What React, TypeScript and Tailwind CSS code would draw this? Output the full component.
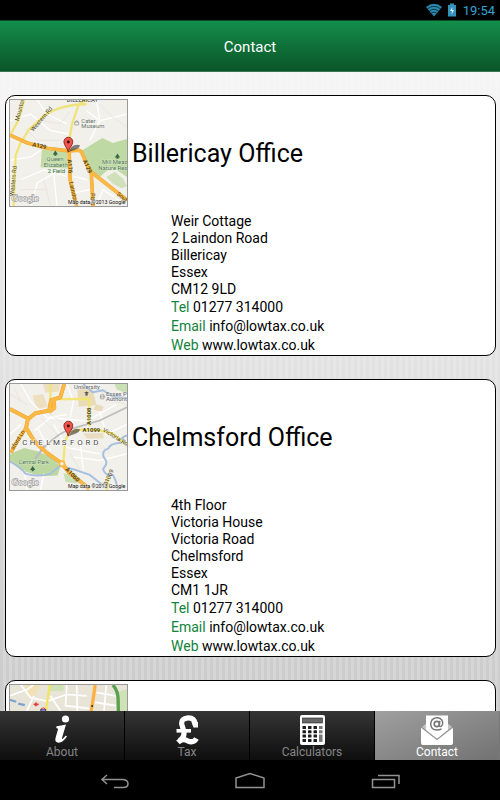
import React, { useState } from 'react';

type Office = {
  name?: string;
  address: string[];
  tel?: string;
  email?: string;
  web?: string;
  map: React.ReactNode;
};

function Pin() {
  return (
    <g>
      <path d="M204 186 L214 170 Q226 160 240 165 Q238 176 222 180 Z" fill="#333" opacity="0.6" />
      <path
        d="M204 186 C202 172 191 167 191 154 A13.500 13.500 0 0 1 218 154 C218 167 206 172 204 186 Z"
        fill="#f0544a"
        stroke="#7d1d16"
        strokeWidth="2.500"
      />
      <circle cx="204.500" cy="155" r="4.500" fill="#3b0a08" />
    </g>
  );
}

function MapCredits({ label }: { label: string }) {
  return (
    <g>
      <text x="32" y="335" fontSize="28" fontFamily="Liberation Serif, serif" fill="#fff" stroke="#9a9a9a" strokeWidth="4" paintOrder="stroke">
        Google
      </text>
      <text x="378" y="344" fontSize="16" textAnchor="end" fill="#111" stroke="#f4f2ec" strokeWidth="2" paintOrder="stroke">
        {label}
      </text>
    </g>
  );
}

function BillericayMap() {
  return (
    <svg viewBox="27 27 356 323" preserveAspectRatio="none" className="block h-full w-full font-[Roboto]">
      <rect x="27" y="27" width="356" height="323" fill="#f2f0eb" />
      <path d="M124 178 L200 186 L203 236 L120 232 Z" fill="#c3dba5" />
      <path d="M247 180 L308 143 L340 158 L383 146 L383 262 L340 232 L318 246 L300 262 L272 240 Z" fill="#bfd9a4" />
      <path d="M320 262 L346 246 L372 268 L383 290 L366 296 L340 282 Z" fill="#cfe0ba" />
      <g fill="none" stroke="#fff" strokeWidth="4">
        <path d="M27 90 L90 70 L150 120 L205 130" />
        <path d="M110 27 L140 70 L200 100" />
        <path d="M30 210 L90 200 L120 180" />
        <path d="M60 270 L130 240 L200 260" />
        <path d="M90 350 L110 280 L160 250 L170 350" />
        <path d="M260 60 L300 90 L383 70" />
        <path d="M290 27 L300 90 L270 150" />
        <path d="M220 260 L262 270 M222 310 L270 300" />
        <path d="M290 350 L310 300 L370 340" />
      </g>
      <g fill="none" stroke="#e4e1da" strokeWidth="2">
        <path d="M70 110 L110 150 L180 150 M210 60 L180 100 L130 90" />
        <path d="M60 300 L140 300 M130 270 L150 350 M300 40 L340 80 L383 110" />
      </g>
      <g fill="none" stroke="#efe47c" strokeWidth="7">
        <path d="M70 27 L52 90 L30 130" />
        <path d="M260 27 L236 40 L216 100 L207 150 L206 180" />
        <path d="M260 40 Q180 40 130 76 L84 118 L58 160 L44 196 L38 350" />
      </g>
      <g fill="none" strokeLinejoin="round">
        <path d="M27 134 L80 158 L140 174 L205 182 L236 180 L244 184 L262 226 L276 248 L383 332" stroke="#e9a436" strokeWidth="11" />
        <path d="M207 182 L210 270 L230 350" stroke="#e9a436" strokeWidth="11" />
        <path d="M274 246 L280 350" stroke="#e9a436" strokeWidth="11" />
        <path d="M27 134 L80 158 L140 174 L205 182 L236 180 L244 184 L262 226 L276 248 L383 332" stroke="#fbb842" strokeWidth="9" />
        <path d="M207 182 L210 270 L230 350 M274 246 L280 350" stroke="#fbb842" strokeWidth="9" />
      </g>
      <g fontSize="18" fill="#4f471c">
        <text transform="translate(54 92) rotate(-76)">Mounton</text>
        <text transform="translate(98 124) rotate(-50)">Western Rd</text>
        <text transform="translate(38 320) rotate(-84)">Western Rd</text>
        <text x="94" y="168" fontWeight="bold" transform="rotate(12 94 168)">A129</text>
        <text transform="translate(202 208) rotate(86)" fontWeight="bold">A176</text>
        <text transform="translate(207 278) rotate(78)">Laindon</text>
        <text transform="translate(248 212) rotate(66)" fontWeight="bold">A129</text>
        <text transform="translate(284 348) rotate(-86)">S Rd</text>
        <text transform="translate(350 316) rotate(38)">Sout</text>
        <text x="200" y="34" fill="#333">BILLERICAY</text>
      </g>
      <g fontSize="18" fill="#66716b" stroke="#f4f3ee" strokeWidth="2" paintOrder="stroke">
        <text x="244" y="96">Cater</text>
        <text x="244" y="113">Museum</text>
      </g>
      <path d="M224 94 h12 v9 h-12 z M227 94 v-3 h6 v3" fill="none" stroke="#8a8a8a" strokeWidth="2" />
      <g fontSize="18" fill="#3f7248" stroke="#e8f0dc" strokeWidth="2" paintOrder="stroke" textAnchor="middle">
        <text x="164" y="214">Queen</text>
        <text x="166" y="231">Elizabeth</text>
        <text x="168" y="248">2 Field</text>
        <text x="346" y="223">Mill Mead</text>
        <text x="340" y="240">Nature Res</text>
      </g>
      <path d="M165 181 l8 12 h-5 v4 h-6 v-4 h-5 z M354 190 l8 12 h-5 v4 h-6 v-4 h-5 z" fill="#35674b" />
      <Pin />
      <MapCredits label="Map data ©2013 Google" />
    </svg>
  );
}

function ChelmsfordMap() {
  return (
    <svg viewBox="27 27 356 323" preserveAspectRatio="none" className="block h-full w-full font-[Roboto]">
      <rect x="27" y="27" width="356" height="323" fill="#f2f0eb" />
      <path d="M96 62 L128 58 L142 96 L108 104 Z M128 27 L180 27 L176 50 L134 54 Z" fill="#eddfbf" />
      <path d="M232 44 L278 40 L290 92 L236 96 Z M290 88 L312 96 L306 110 L280 106 Z" fill="#eadbb8" />
      <path d="M250 178 L310 176 L312 192 L262 194 Z" fill="#e9dcc0" />
      <path d="M27 240 L70 222 L110 232 L158 252 L180 280 L172 306 L120 308 L60 290 L27 262 Z" fill="#bdd7a0" />
      <path d="M345 27 L383 27 L383 56 L352 44 Z M190 300 L230 300 L232 330 L196 326 Z" fill="#c9dfb4" />
      <g fill="none" stroke="#fff" strokeWidth="4">
        <path d="M60 27 L90 80 L140 130 L200 120" />
        <path d="M100 170 L150 130 L260 140 L350 90" />
        <path d="M200 27 L220 80 L210 130" />
        <path d="M110 160 L150 230 M160 150 L200 220 L300 240" />
        <path d="M240 200 L250 290 M220 250 L300 260 L383 240" />
        <path d="M27 180 L60 150 M300 110 L320 180 L383 150" />
        <path d="M70 290 L80 350 M130 300 L120 350" />
      </g>
      <g fill="none" stroke="#e2dfd8" strokeWidth="2">
        <path d="M120 130 L180 190 M140 110 L230 180 M280 190 L330 240 M210 240 L240 290" />
        <path d="M30 60 L80 90 M40 40 L60 80 M300 40 L320 70 L383 90" />
      </g>
      <g fill="none" stroke="#a6bfdf" strokeWidth="6" strokeLinejoin="round">
        <path d="M250 27 L278 52 L310 46 L340 66 L383 70" />
        <path d="M27 264 Q60 280 74 300 Q110 312 150 300 L180 276 L230 290 L270 304 L320 344" />
        <path d="M383 184 Q362 190 366 206 Q330 208 326 224 Q306 228 312 250 Q330 266 310 286 Q318 310 340 304 L348 320 L356 350" />
        <path d="M104 256 L132 214" />
      </g>
      <path d="M104 254 Q150 190 206 166 L300 138 L383 98" fill="none" stroke="#bdbdbd" strokeWidth="5" />
      <g fill="none" stroke="#f2e576" strokeWidth="7" strokeLinejoin="round">
        <path d="M150 27 L150 74 L268 72 L268 156" />
        <path d="M190 262 L194 202 L206 176 L240 166 L300 168 L340 178 L376 208" />
        <path d="M322 350 L326 310" />
      </g>
      <g fill="none" strokeLinejoin="round">
        <path d="M27 103 L82 132 L76 160 L100 200 L138 236 L186 270 L206 296 L268 346" stroke="#e8a132" strokeWidth="12" />
        <path d="M192 27 L180 68 L152 76 L146 108 L104 116 L82 134 M160 76 L162 100 L146 112" stroke="#e8a132" strokeWidth="12" />
        <path d="M78 158 L56 190 L30 236" stroke="#e8a132" strokeWidth="10" />
        <path d="M27 103 L82 132 L76 160 L100 200 L138 236 L186 270 L206 296 L268 346" stroke="#fbb842" strokeWidth="10" />
        <path d="M192 27 L180 68 L152 76 L146 108 L104 116 L82 134 M160 76 L162 100 L146 112" stroke="#fbb842" strokeWidth="10" />
        <path d="M78 158 L56 190 L30 236" stroke="#fbb842" strokeWidth="8" />
      </g>
      <circle cx="185" cy="270" r="8" fill="#f2f0eb" stroke="#fbb842" strokeWidth="5" />
      <g fontSize="18" fill="#4f471c">
        <text transform="translate(274 152) rotate(-90)" fontWeight="bold">A1008</text>
        <text x="248" y="174" fontWeight="bold">A1099</text>
        <text transform="translate(308 170) rotate(32)">Victoria Rd</text>
        <text transform="translate(38 228) rotate(-58)">sford Ln</text>
        <text transform="translate(194 288) rotate(46)" fontWeight="bold">A1060</text>
        <text transform="translate(322 338) rotate(-66)">B1009</text>
      </g>
      <g fontSize="18" fill="#5d646e" stroke="#f4f3ee" strokeWidth="2" paintOrder="stroke">
        <text x="222" y="43">University</text>
        <text x="319" y="63">Essex P</text>
        <text x="319" y="80">Authorit</text>
      </g>
      <path d="M253 54 l7 -4 l7 4 l-7 4 z M256 58 h8 v4 h-8 z" fill="#55534f" />
      <path d="M303 60 h10 v12 h-10 z M300 66 h16" fill="none" stroke="#8a8a8a" strokeWidth="2" />
      <text x="53" y="270" fontSize="17" fill="#3f7248" stroke="#e8f0dc" strokeWidth="2" paintOrder="stroke">
        Central Park
      </text>
      <path d="M96 277 l8 12 h-5 v4 h-6 v-4 h-5 z" fill="#35674b" />
      <g fontSize="24" fill="#444" stroke="#fff" strokeWidth="3" paintOrder="stroke" textAnchor="middle">
        {'CHELMSFORD'.split('').map((letter, i) => (
          <text key={i} x={72 + i * 24} y="214">
            {letter}
          </text>
        ))}
      </g>
      <Pin />
      <MapCredits label="Map data ©2013 Google" />
    </svg>
  );
}

function TownMap() {
  return (
    <svg viewBox="27 27 356 323" preserveAspectRatio="none" className="block h-full w-full">
      <rect x="27" y="27" width="356" height="323" fill="#e9e4d8" />
      <path d="M150 27 h40 v18 h-42 z M350 50 L383 40 L383 120 L352 110 Z" fill="#cfe2b6" />
      <path d="M72 27 L120 27 L104 60 L84 58 Z" fill="#f0e2b4" />
      <g fill="none" stroke="#fff" strokeWidth="5">
        <path d="M27 60 L80 40 L98 27 M60 27 L90 66 L140 76 L200 56 L260 60" />
        <path d="M76 110 L100 60 M150 60 L170 90 L190 120 M200 27 L196 90 L280 100" />
        <path d="M290 50 L350 60 M286 80 L350 90 M320 27 L312 120 M230 27 L232 110" />
      </g>
      <path d="M27 72 L46 78 M52 84 L72 88" fill="none" stroke="#7ea3d2" strokeWidth="7" />
      <path d="M148 27 L140 80 L132 140" fill="none" stroke="#f2e45c" strokeWidth="7" />
      <path d="M286 27 L280 70 L270 130" fill="none" stroke="#fbb040" strokeWidth="10" />
      <path d="M340 27 Q358 46 356 80 L358 140" fill="none" stroke="#5aa050" strokeWidth="10" />
      <path d="M106 80 v12 M99 86 h15" stroke="#e5383b" strokeWidth="5" />
      <circle cx="128" cy="104" r="7" fill="#fff" stroke="#d92b2b" strokeWidth="3" />
      <path d="M119 103 h18" stroke="#20389c" strokeWidth="4" />
      <circle cx="277" cy="91" r="3" fill="#222" />
    </svg>
  );
}

const offices: Office[] = [
  {
    name: 'Billericay Office',
    address: ['Weir Cottage', '2 Laindon Road', 'Billericay', 'Essex', 'CM12 9LD'],
    tel: '01277 314000',
    email: 'info@lowtax.co.uk',
    web: 'www.lowtax.co.uk',
    map: <BillericayMap />,
  },
  {
    name: 'Chelmsford Office',
    address: ['4th Floor', 'Victoria House', 'Victoria Road', 'Chelmsford', 'Essex', 'CM1 1JR'],
    tel: '01277 314000',
    email: 'info@lowtax.co.uk',
    web: 'www.lowtax.co.uk',
    map: <ChelmsfordMap />,
  },
  { address: [], map: <TownMap /> },
];

function OfficeCard({ office }: { office: Office }) {
  return (
    <section className="shrink-0 rounded-[10px] border border-black bg-white px-[3px] pt-[3px]">
      <div className="flex items-center gap-1">
        <div className="h-[108px] w-[119px] shrink-0 border border-[#999]">{office.map}</div>
        {office.name && <h2 className="pt-0.5 text-[25px] leading-8">{office.name}</h2>}
      </div>
      {office.tel && (
        <div className="ml-[162px] pt-[6px] text-sm">
          <address className="leading-[17px] not-italic">
            {office.address.map((line) => (
              <p key={line}>{line}</p>
            ))}
          </address>
          <p className="leading-[19px]">
            <span className="text-[#11833b]">Tel</span> <a href={`tel:${office.tel}`}>{office.tel}</a>
          </p>
          <p className="leading-[19px]">
            <span className="text-[#11833b]">Email</span> <a href={`mailto:${office.email}`}>{office.email}</a>
          </p>
          <p className="leading-[19px]">
            <span className="text-[#11833b]">Web</span> <a href={`http://${office.web}`}>{office.web}</a>
          </p>
        </div>
      )}
    </section>
  );
}

const InfoIcon = () => (
  <svg viewBox="0 0 32 30" className="h-[30px] w-8" fill="#fff">
    <circle cx="19.500" cy="4" r="3.600" />
    <path d="M10.500 11.300 Q15 10.600 20 9.400 L16 23 Q15.800 24.500 17 23.600 L19.800 20.600 L21 21.600 Q16.500 28 12.500 27.800 Q8.700 27.500 9.400 23.600 L12 14.300 Q12.200 13 10.300 12.900 Z" />
  </svg>
);

const PoundIcon = () => (
  <svg viewBox="0 0 32 30" className="h-[30px] w-8" fill="none" stroke="#fff">
    <path d="M24.500 9.500 Q23.500 2.600 17 2.800 Q9.800 3.500 10.800 9.500 L12.800 16 Q14 22 8.500 25.500" strokeWidth="5.200" />
    <path d="M5.500 15.800 H20" strokeWidth="3.600" />
    <path d="M7 27.300 Q11.500 23 16.500 25.800 Q22.500 28.500 25.500 23.500" strokeWidth="5.200" />
    <path d="M20.500 7 H27 V12.500 H22.500 Z" fill="#fff" stroke="none" />
  </svg>
);

const CalculatorIcon = () => (
  <svg viewBox="0 0 32 30" className="h-[30px] w-8">
    <rect x="4" y="0" width="25" height="30" rx="2" fill="#fff" />
    <rect x="6.500" y="3" width="20" height="5" fill="#666" stroke="#222" strokeWidth="0.600" />
    {[11, 15.3, 19.6, 23.900].map((y) =>
      [6.5, 12, 17.5].map((x) => <rect key={`${x}-${y}`} x={x} y={y} width="3.500" height="3" rx="0.500" fill="#1c1c1c" />)
    )}
    <rect x="23" y="11" width="3.500" height="3" fill="#777" />
    <rect x="23" y="15.300" width="3.500" height="3" fill="#777" />
    <rect x="23" y="19.600" width="3.500" height="7.300" fill="#777" />
  </svg>
);

const MailIcon = () => (
  <svg viewBox="0 0 32 30" className="h-[30px] w-8">
    <path d="M1 12 L6 8 H26 L31 12 L16 24 Z" fill="#c4c4c4" />
    <path d="M5 0.500 H27 V15 L16 24 L5 15 Z" fill="#fff" />
    <path d="M0 12 L16 24.500 L32 12 V28 Q32 30 30 30 H2 Q0 30 0 28 Z" fill="#fff" />
    <path d="M0 12 L16 24.500 L32 12" fill="none" stroke="#999" strokeWidth="1.200" />
    <circle cx="15.800" cy="9" r="2.600" fill="none" stroke="#777" strokeWidth="1.600" />
    <path d="M18.800 5.800 L18.200 10.500 Q18.800 12.200 20.500 11.200 Q22.300 9 21.500 6.300 Q19.500 2.500 15.500 2.800 Q10 3.500 9.700 9 Q10 14.800 15.800 15 Q18.500 15 20.500 13.800" fill="none" stroke="#777" strokeWidth="1.500" />
  </svg>
);

const tabs = [
  { id: 'about', label: 'About', icon: <InfoIcon /> },
  { id: 'tax', label: 'Tax', icon: <PoundIcon /> },
  { id: 'calculators', label: 'Calculators', icon: <CalculatorIcon /> },
  { id: 'contact', label: 'Contact', icon: <MailIcon /> },
];

function StatusBar() {
  return (
    <div className="flex h-5 shrink-0 items-center justify-end bg-black pr-[5px] text-[#33a5d5]">
      <svg viewBox="0 0 18 14" className="mr-[4px] h-[14px] w-[18px]">
        <path d="M1 4 Q9 -2.500 17 4 L9 13.500 Z" fill="#2b87ad" />
        <path d="M2.500 5.800 Q9 0.800 15.500 5.800 M4.500 8 Q9 4.500 13.500 8 M6.300 10.200 Q9 8 11.700 10.200" fill="none" stroke="#06222e" strokeWidth="0.800" />
      </svg>
      <svg viewBox="0 0 10 14" className="mr-[6px] h-[14px] w-[10px]">
        <path d="M3 0.500 H7 V2 H9 V13.500 H1 V2 H3 Z" fill="#3493bd" />
        <path d="M5.500 4 L3 8 H5 L4.500 11.500 L7 7 H5.200 Z" fill="#e6f6fc" />
      </svg>
      <span className="pt-0.5 text-[13px] leading-5">19:54</span>
    </div>
  );
}

export default function App() {
  const [activeTab, setActiveTab] = useState('contact');

  return (
    <div className="flex h-screen flex-col overflow-hidden bg-black font-[Roboto,sans-serif] text-black">
      <StatusBar />

      <header className="flex h-[52px] shrink-0 items-center justify-center border-y border-t-[#0b4d26] border-b-[#3d7552] bg-linear-to-b from-[#138e4b] to-[#0b5528]">
        <h1 className="pt-0.5 text-[15px] text-white">Contact</h1>
      </header>

      {/* the stripes fade in towards the bottom of the page */}
      <main className="flex min-h-0 flex-1 flex-col gap-[23px] overflow-y-auto bg-[linear-gradient(180deg,rgba(250,250,250,0.9),rgba(250,250,250,0)),repeating-linear-gradient(90deg,#cacaca_0px,#cacaca_3px,#d4d4d4_3px,#d4d4d4_6px)] pt-[23px] pr-1 pb-6 pl-[5px] [scrollbar-width:none]">
        {offices.map((office, i) => (
          <OfficeCard key={i} office={office} />
        ))}
      </main>

      <nav className="grid h-[49px] shrink-0 grid-cols-4 bg-black">
        {tabs.map((tab) => (
          <button
            key={tab.id}
            type="button"
            onClick={() => setActiveTab(tab.id)}
            className={`flex flex-col items-center border-r pt-1 ${
              activeTab === tab.id
                ? 'border-[#777] bg-linear-to-br from-[#a0a0a0] to-[#727272] text-white'
                : 'border-black bg-linear-to-b from-[#363636] to-[#0e0e0e] text-[#858585]'
            }`}
          >
            {tab.icon}
            <span className="text-xs leading-[14px]">{tab.label}</span>
          </button>
        ))}
      </nav>

      <div className="flex h-10 shrink-0 items-center justify-center gap-[105px] bg-black">
        <button type="button" aria-label="Back">
          <svg viewBox="0 0 30 20" className="h-5 w-[30px]" fill="none" stroke="#929292" strokeWidth="1.500">
            <path d="M7 5 L2 9.500 L7 14 M2 9.500 H23 Q28 10 28 13.700 Q28 17.500 23 17.500 H14" />
          </svg>
        </button>
        <button type="button" aria-label="Home">
          <svg viewBox="0 0 30 20" className="h-5 w-[30px]" fill="none" stroke="#929292" strokeWidth="1.500">
            <path d="M1 17.500 V8 L15 3.500 L29 8 V17.500 Z" />
          </svg>
        </button>
        <button type="button" aria-label="Recent apps">
          <svg viewBox="0 0 30 20" className="h-5 w-[30px]" fill="none" stroke="#929292" strokeWidth="1.500">
            <path d="M2.500 9.500 H24.500 V17.500 H2.500 Z M8 5.500 H29 V14" />
          </svg>
        </button>
      </div>
    </div>
  );
}
